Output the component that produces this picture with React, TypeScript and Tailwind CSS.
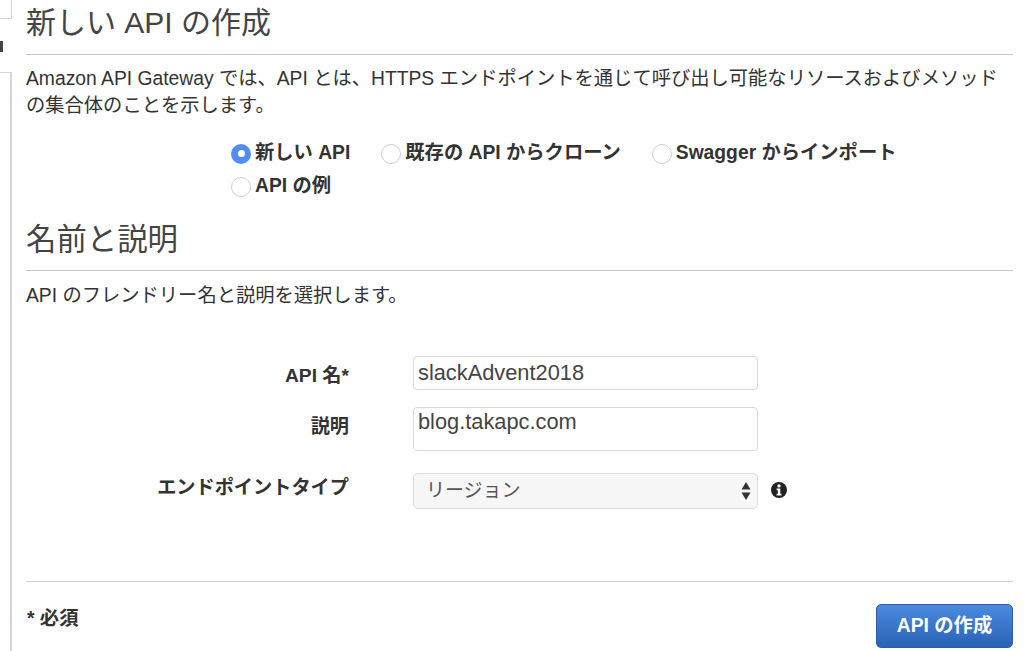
import React from 'react';

const font = { fontFamily: '"Liberation Sans", "Noto Sans CJK JP", sans-serif' };

const Radio: React.FC<{ label: string; checked?: boolean }> = ({ label, checked }) => (
  <label className="flex h-[33px] items-center gap-[4px] text-[19.3px] font-bold text-[#333]">
    {checked ? (
      <span className="flex h-[20px] w-[20px] items-center justify-center rounded-full bg-[#4f8ef0]">
        <span className="h-[7px] w-[7px] rounded-full bg-white" />
      </span>
    ) : (
      <span className="h-[20px] w-[20px] rounded-full border border-[#cfcfcf] bg-white" />
    )}
    {label}
  </label>
);

const Field: React.FC<{ label: string; className?: string; labelClass?: string; children: React.ReactNode }> = ({
  label,
  className,
  labelClass,
  children,
}) => (
  <div className={`flex ${className ?? ''}`}>
    <div className={`w-[323px] text-right text-[19.2px] font-bold leading-[34px] text-[#333] ${labelClass ?? ''}`}>
      {label}
    </div>
    <div className="ml-[64px] flex items-center">{children}</div>
  </div>
);

export default function App() {
  return (
    <div style={font} className="flex h-[651px] w-[1024px] overflow-hidden bg-white">
      {/* sidebar edges */}
      <div className="flex w-[12px] shrink-0 flex-col">
        <div className="h-[19px] border-b border-r border-[#d5d5d5]" />
        <div className="mt-[22px] h-[11px] w-[3px] bg-[#444]" />
        <div className="mt-[20px] flex-1 border-r-2 border-t border-[#d5d5d5]" />
      </div>

      <div className="ml-[14px] w-[987px]">
        <h1 className="h-[55px] border-b border-[#c8c8c8] pt-[3px] text-[30px] leading-[40px] text-[#444]">
          新しい API の作成
        </h1>
        <p className="mt-[10px] text-[19.3px] leading-[27px] text-[#333]">
          Amazon API Gateway では、API とは、HTTPS エンドポイントを通じて呼び出し可能なリソースおよびメソッドの集合体のことを示します。
        </p>

        <div className="ml-[205px] mt-[18px] flex flex-wrap gap-x-[31px]">
          <Radio label="新しい API" checked />
          <Radio label="既存の API からクローン" />
          <Radio label="Swagger からインポート" />
          <Radio label="API の例" />
        </div>

        <h2 className="mt-[14px] h-[54px] border-b border-[#c8c8c8] pt-[2px] text-[30.4px] leading-[40px] text-[#444]">
          名前と説明
        </h2>
        <p className="mt-[11px] text-[19.3px] leading-[27px] text-[#333]">API のフレンドリー名と説明を選択します。</p>

        <Field label="API 名*" className="mt-[44px]" labelClass="pt-[6px]">
          <input
            readOnly
            value="slackAdvent2018"
            className="h-[34px] w-[345px] rounded-[4px] border border-[#d9d9d9] px-[4px] text-[21.8px] text-[#444] outline-none"
          />
        </Field>
        <Field label="説明" className="mt-[14px]" labelClass="pt-[3px]">
          <textarea
            readOnly
            value="blog.takapc.com"
            className="h-[44px] w-[345px] resize-none rounded-[4px] border border-[#d9d9d9] px-[4px] py-0 text-[21.8px] leading-[28px] text-[#444] outline-none"
          />
        </Field>
        <Field label="エンドポイントタイプ" className="mt-[22px]" labelClass="-mt-[2px]">
          <div className="flex h-[36px] w-[345px] items-center justify-between rounded-[5px] border border-[#dcdcdc] bg-[#f7f7f7] pl-[12px] pr-[6px] text-[19px] text-[#555]">
            リージョン
            <svg width="10" height="20" viewBox="0 0 10 20" className="text-[#333]">
              <path d="M5 1 9.5 8.5H.5Z M.5 11.5h9L5 19Z" fill="currentColor" />
            </svg>
          </div>
          <svg width="16" height="16" viewBox="0 0 16 16" className="ml-[13px] -mt-[3px] shrink-0">
            <circle cx="8" cy="8" r="8" fill="#222" />
            <circle cx="8" cy="3.9" r="1.7" fill="#fff" />
            <path d="M5.6 6.6h3.7v5.2h1.2v1.7H5.6v-1.7h1.3V8.3H5.6Z" fill="#fff" />
          </svg>
        </Field>

        <div className="mt-[72px] flex h-[70px] items-start justify-between border-t border-[#d0d0d0]">
          <span className="ml-[1px] mt-[25px] text-[19.3px] font-bold leading-[24px] text-[#333]">* 必須</span>
          <button className="mt-[22px] h-[44px] w-[137px] rounded-[5px] border border-[#2b5ea8] bg-gradient-to-b from-[#4a8be0] to-[#2a62b4] text-[19.3px] font-bold text-white">
            API の作成
          </button>
        </div>
      </div>
    </div>
  );
}
